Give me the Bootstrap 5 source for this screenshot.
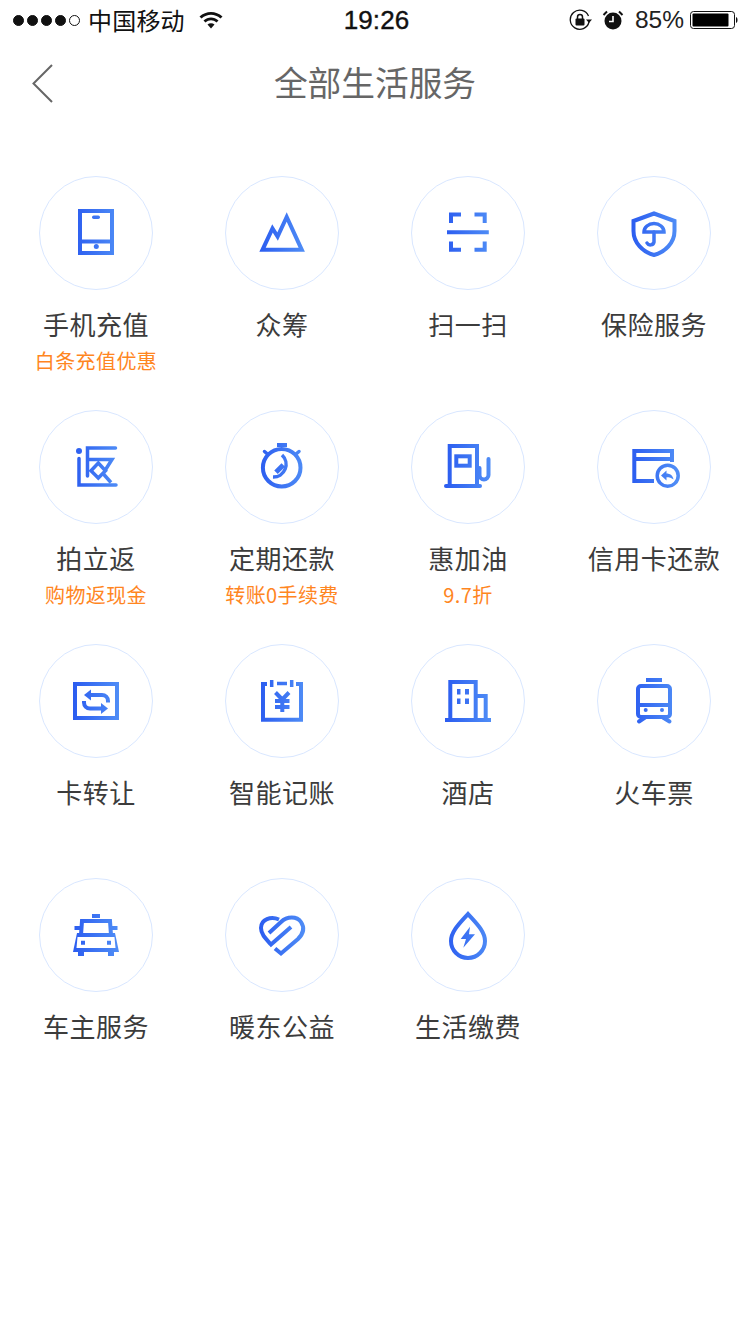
<!DOCTYPE html>
<html lang="zh-CN">
<head>
    <meta charset="UTF-8">
    <meta name="viewport" content="width=device-width, initial-scale=1.0">
    <title>全部生活服务</title>
    <link href="https://cdn.jsdelivr.net/npm/bootstrap@5.3.0/dist/css/bootstrap.min.css" rel="stylesheet">
    <style>
        body { width: 750px; height: 1334px; overflow: hidden; background: #fff; font-family: "Noto Sans CJK SC", sans-serif; }
        .defs-svg { width: 0; height: 0; }
        .status-bar { height: 40px; padding: 0 10px 0 13px; color: #111; }
        .status-side { width: 330px; }
        .signal-dot { width: 11px; height: 11px; border-radius: 50%; background: #111; border: 1px solid #111; margin-right: 3px; }
        .signal-dot.is-empty { background: #fff; }
        .carrier { font-size: 24px; line-height: 40px; margin-left: 5px; margin-right: 13px; letter-spacing: .2px; }
        .clock { font-family: "Liberation Sans", sans-serif; font-size: 26px; line-height: 40px; font-weight: 500; letter-spacing: .1px; -webkit-text-stroke: .4px #111; }
        .percent { font-family: "Liberation Sans", sans-serif; font-size: 24.5px; line-height: 40px; margin: 0 6px 0 11px; color: #222; }
        .title-bar { height: 88px; padding-left: 30px; }
        .back-link { width: 26px; }
        .page-title { font-size: 33.7px; line-height: 84px; color: #666; font-weight: 400; margin: -4px 0 0 -56px; width: 750px; text-align: center; }
        .service-grid { width: 744px; margin: 48px auto 0; }
        .service-cell { height: 234px; }
        .service-ring { width: 114px; height: 114px; border: 1px solid #d9e7ff; border-radius: 50%; }
        .service-ring svg { width: 114px; height: 114px; margin: -1px; flex: none; }
        .service-name { font-size: 26px; line-height: 36px; margin-top: 16px; color: #3c3c3c; white-space: nowrap; letter-spacing: .5px; }
        .service-note { font-size: 20px; line-height: 36px; margin-top: 1px; color: #ff861f; white-space: nowrap; letter-spacing: .4px; }
        .ico-line { fill: none; stroke: url(#blueRamp); stroke-width: 4; }
        .ico-thin { fill: none; stroke: url(#blueRamp); stroke-width: 3.5; }
        .ico-round { stroke-linecap: round; }
        .ico-fill { fill: url(#blueRamp); }
    </style>
</head>
<body>
    <svg class="defs-svg d-block" aria-hidden="true">
        <defs>
            <linearGradient id="blueRamp" gradientUnits="userSpaceOnUse" x1="34" y1="57" x2="80" y2="57">
                <stop offset="0" stop-color="#2b5cf0"/>
                <stop offset="1" stop-color="#4f8df6"/>
            </linearGradient>
        </defs>
    </svg>

    <!-- status bar -->
    <div class="status-bar d-flex align-items-center justify-content-between">
        <div class="status-side d-flex align-items-center">
            <span class="signal-dot"></span><span class="signal-dot"></span><span class="signal-dot"></span><span class="signal-dot"></span><span class="signal-dot is-empty"></span>
            <span class="carrier">中国移动</span>
            <svg width="26" height="20" viewBox="0 0 26 20">
                <path d="M1.5 6.5C8 .5 18 .5 24.500 6.500l-2 2C16.500 3.500 9.500 3.500 3.500 8.500Z" fill="#111"/>
                <path d="M5.500 10.500C10 6.500 16 6.500 20.500 10.500l-2 2C15 9.500 11 9.500 7.500 12.500Z" fill="#111"/>
                <path d="M9.500 14.500C11.500 12.800 14.500 12.800 16.500 14.500L13 18.500Z" fill="#111"/>
            </svg>
        </div>
        <span class="clock">19:26</span>
        <div class="status-side d-flex align-items-center justify-content-end">
            <svg width="25" height="22" viewBox="0 0 25 22" class="me-2">
                <path d="M19.500 7A9.500 9.500 0 1 0 20 13" fill="none" stroke="#111" stroke-width="1.300"/>
                <path d="M17 10.500h6l-3 3.500Z" fill="#111"/>
                <rect x="6.500" y="9.500" width="9" height="7" rx="1" fill="#111"/>
                <path d="M8.500 10V8a2.500 2.500 0 0 1 5 0v2" fill="none" stroke="#111" stroke-width="1.500"/>
            </svg>
            <svg width="22" height="22" viewBox="0 0 22 22">
                <circle cx="11" cy="12" r="8.500" fill="#111"/>
                <path d="M11 7v5.500H7" fill="none" stroke="#fff" stroke-width="1.600"/>
                <path d="M1.500 6 5 2.500M20.500 6 17 2.500" stroke="#111" stroke-width="2" fill="none"/>
            </svg>
            <span class="percent">85%</span>
            <svg width="50" height="20" viewBox="0 0 50 20">
                <rect x=".5" y="1.500" width="44" height="17" rx="3" fill="none" stroke="#111"/>
                <rect x="2.500" y="3.500" width="36" height="13" rx="1" fill="#000"/>
                <path d="M46 7c2 .5 2 5.500 0 6Z" fill="#111"/>
            </svg>
        </div>
    </div>

    <!-- title -->
    <div class="title-bar d-flex align-items-center">
        <a class="back-link d-block" href="#">
            <svg width="26" height="42" viewBox="0 0 26 42" class="d-block"><path d="M22 2 3.500 20.500 22 39" fill="none" stroke="#666" stroke-width="2"/></svg>
        </a>
        <h1 class="page-title">全部生活服务</h1>
    </div>

    <!-- services -->
    <div class="service-grid row row-cols-4 g-0">
        <div class="col service-cell d-flex flex-column align-items-center">
            <div class="service-ring d-flex">
                <svg viewBox="0 0 114 114">
                    <rect class="ico-line" x="41" y="35" width="32" height="42"/>
                    <path class="ico-line" d="M41 65.500H73"/>
                    <rect class="ico-fill" x="53" y="39.500" width="8" height="3.500" rx="1.700"/>
                    <circle class="ico-fill" cx="57.300" cy="70.500" r="2.500"/>
                </svg>
            </div>
            <div class="service-name">手机充值</div>
            <div class="service-note">白条充值优惠</div>
        </div>
        <div class="col service-cell d-flex flex-column align-items-center">
            <div class="service-ring d-flex">
                <svg viewBox="0 0 114 114">
                    <path class="ico-line" d="M37.500 73.800H76.800L61.700 41 52.600 60.500 47.500 52.500Z"/>
                </svg>
            </div>
            <div class="service-name">众筹</div>
        </div>
        <div class="col service-cell d-flex flex-column align-items-center">
            <div class="service-ring d-flex">
                <svg viewBox="0 0 114 114">
                    <path class="ico-line" d="M50 38.500H40V47M63.500 38.500H73.700V47M50 73.700H40V65.500M63.500 73.700H73.700V65.500"/>
                    <path class="ico-line" d="M36 56.300H77.800"/>
                </svg>
            </div>
            <div class="service-name">扫一扫</div>
        </div>
        <div class="col service-cell d-flex flex-column align-items-center">
            <div class="service-ring d-flex">
                <svg viewBox="0 0 114 114">
                    <path class="ico-line" d="M57 37.500 36.500 45V55C36.500 67 46 76 57 79 68 76 77.500 67 77.500 55V45Z"/>
                    <path class="ico-thin" d="M47 56A10 8.500 0 0 1 67 56Z"/>
                    <path class="ico-thin ico-round" d="M57 56V66A3.800 3.800 0 0 1 50 67"/>
                </svg>
            </div>
            <div class="service-name">保险服务</div>
        </div>

        <div class="col service-cell d-flex flex-column align-items-center">
            <div class="service-ring d-flex">
                <svg viewBox="0 0 114 114">
                    <circle class="ico-fill" cx="40" cy="41" r="3"/>
                    <path class="ico-thin ico-round" d="M40 48.500V75H77"/>
                    <path class="ico-thin ico-round" d="M76.500 38H48.500V66"/>
                    <path class="ico-thin" d="M48.500 49.500H73L66 60.500"/>
                    <path class="ico-thin" d="M59.300 53 66.500 60.700 59.300 68 52 60.700Z"/>
                    <path class="ico-thin" d="M64 63.500 72 72.500"/>
                </svg>
            </div>
            <div class="service-name">拍立返</div>
            <div class="service-note">购物返现金</div>
        </div>
        <div class="col service-cell d-flex flex-column align-items-center">
            <div class="service-ring d-flex">
                <svg viewBox="0 0 114 114">
                    <circle class="ico-line" cx="56.700" cy="57.700" r="18.800"/>
                    <path class="ico-thin" d="M57 45A12.700 12.700 0 0 1 48 67"/>
                    <path d="M58.300 55 51 62.300" fill="none" stroke="url(#blueRamp)" stroke-width="5"/>
                    <path class="ico-line" d="M52 35H62"/>
                    <path class="ico-thin ico-round" d="M39.500 41.500 43 44.500M74 41.500 70.500 44.500"/>
                </svg>
            </div>
            <div class="service-name">定期还款</div>
            <div class="service-note">转账0手续费</div>
        </div>
        <div class="col service-cell d-flex flex-column align-items-center">
            <div class="service-ring d-flex">
                <svg viewBox="0 0 114 114">
                    <path class="ico-line" d="M38.700 76V36H66V76"/>
                    <path class="ico-line ico-round" d="M35 76H69"/>
                    <rect class="ico-line" x="45.300" y="46.300" width="13.400" height="9.400"/>
                    <path class="ico-line ico-round" d="M68.500 58V65A4.500 4.500 0 0 0 77.500 65V49"/>
                </svg>
            </div>
            <div class="service-name">惠加油</div>
            <div class="service-note">9.7折</div>
        </div>
        <div class="col service-cell d-flex flex-column align-items-center">
            <div class="service-ring d-flex">
                <svg viewBox="0 0 114 114">
                    <path class="ico-line" d="M57 71H37.300V41H75V52"/>
                    <path class="ico-line" d="M37.300 49H75"/>
                    <circle class="ico-thin" cx="70.700" cy="65.700" r="10.500"/>
                    <path class="ico-fill" d="M64 65.500 69.500 60.500V63.500C73 63.500 76 65.500 76.500 69.500 74.500 67.800 72.500 67.300 69.500 67.300V70.500Z"/>
                </svg>
            </div>
            <div class="service-name">信用卡还款</div>
        </div>

        <div class="col service-cell d-flex flex-column align-items-center">
            <div class="service-ring d-flex">
                <svg viewBox="0 0 114 114">
                    <rect class="ico-line" x="36" y="40" width="42" height="34"/>
                    <path class="ico-line" d="M52 51H63A6 6 0 0 1 69 57V58.500"/>
                    <path class="ico-fill" d="M52 45.500 45 51 52 56.500Z"/>
                    <path class="ico-line" d="M62 64.500H51A6 6 0 0 1 45 58.500V57"/>
                    <path class="ico-fill" d="M62 59 69 64.500 62 70Z"/>
                </svg>
            </div>
            <div class="service-name">卡转让</div>
        </div>
        <div class="col service-cell d-flex flex-column align-items-center">
            <div class="service-ring d-flex">
                <svg viewBox="0 0 114 114">
                    <path class="ico-line" d="M42 40H38V75.700H76V40H71"/>
                    <path class="ico-thin" d="M46.700 36V43M66.700 36V43M52 39.500H62"/>
                    <path class="ico-line" d="M50.500 48.500 57.300 55.500 64 48.500M50 57H64.500M50 63H64.500M57.300 55V68"/>
                </svg>
            </div>
            <div class="service-name">智能记账</div>
        </div>
        <div class="col service-cell d-flex flex-column align-items-center">
            <div class="service-ring d-flex">
                <svg viewBox="0 0 114 114">
                    <path class="ico-line" d="M39.300 75V38H64.700V75"/>
                    <path class="ico-line" d="M64.700 52H74.700V75"/>
                    <path class="ico-line" d="M34 76H80"/>
                    <path class="ico-fill" d="M46 45H49.500V50.500H46ZM54 45H58V50.500H54ZM46 54.500H49.500V60H46ZM54 54.500H58V60H54Z"/>
                </svg>
            </div>
            <div class="service-name">酒店</div>
        </div>
        <div class="col service-cell d-flex flex-column align-items-center">
            <div class="service-ring d-flex">
                <svg viewBox="0 0 114 114">
                    <rect class="ico-fill" x="49" y="34" width="16" height="4"/>
                    <rect class="ico-line" x="41" y="42" width="32" height="31" rx="3"/>
                    <path class="ico-line" d="M41 61H73"/>
                    <circle class="ico-fill" cx="48.700" cy="66" r="2"/>
                    <circle class="ico-fill" cx="65" cy="66" r="2"/>
                    <path class="ico-line ico-round" d="M42 77.500 48 73.500M72.500 77.500 66 73.500"/>
                </svg>
            </div>
            <div class="service-name">火车票</div>
        </div>

        <div class="col service-cell d-flex flex-column align-items-center">
            <div class="service-ring d-flex">
                <svg viewBox="0 0 114 114">
                    <rect class="ico-fill" x="53" y="36" width="8" height="4"/>
                    <path class="ico-line" d="M42 57 43 43H71L72 57"/>
                    <path class="ico-fill" d="M38 55H76L80 74H34Z"/>
                    <path d="M38.500 59H75.500L76.500 70H37.500Z" fill="#fff"/>
                    <path class="ico-fill" d="M35.500 48H41V52H35.500ZM73 48H78.500V52H73ZM42 62.700H46V66.700H42ZM68 62.700H72V66.700H68ZM39 73H45V78H39ZM69 73H75V78H69Z"/>
                </svg>
            </div>
            <div class="service-name">车主服务</div>
        </div>
        <div class="col service-cell d-flex flex-column align-items-center">
            <div class="service-ring d-flex">
                <svg viewBox="0 0 114 114">
                    <path class="ico-line" d="M54 41.500C46 38 36 41 36 50 36 56 40 60 46 66.500L66 49"/>
                    <path class="ico-line" d="M44 55 56 44C62 38 72 38 76 44 80 50 78 56 73 61L56 75.500 50 70.500"/>
                </svg>
            </div>
            <div class="service-name">暖东公益</div>
        </div>
        <div class="col service-cell d-flex flex-column align-items-center">
            <div class="service-ring d-flex">
                <svg viewBox="0 0 114 114">
                    <path class="ico-line" d="M57 36C50 44 40 53 40 63A17 17 0 0 0 74 63C74 53 64 44 57 36Z"/>
                    <path class="ico-fill" d="M59 48.700 49.700 61H55L52.300 69.700 64 56.300H58Z"/>
                </svg>
            </div>
            <div class="service-name">生活缴费</div>
        </div>
    </div>

    <script src="https://cdn.jsdelivr.net/npm/bootstrap@5.3.0/dist/js/bootstrap.bundle.min.js"></script>
</body>
</html>
